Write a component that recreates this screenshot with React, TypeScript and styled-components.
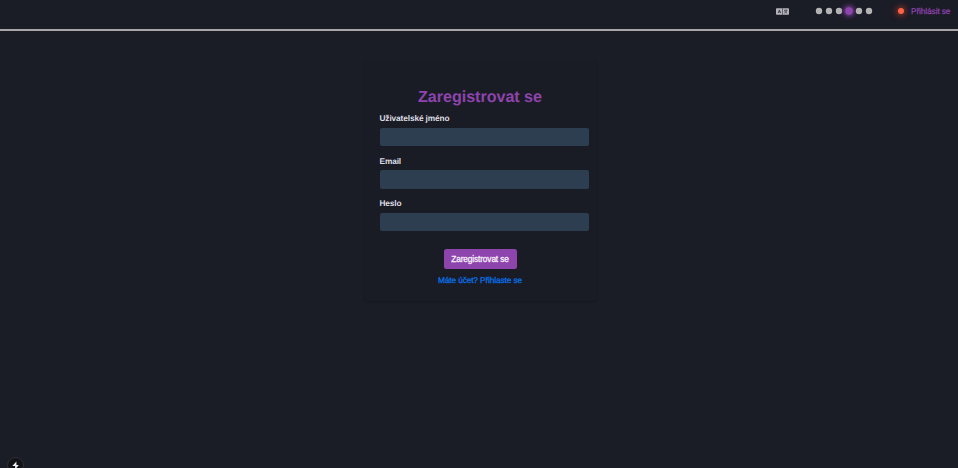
import React from "react";
import styled, { createGlobalStyle } from "styled-components";

const GlobalStyle = createGlobalStyle`
  * { box-sizing: border-box; }
  body {
    margin: 0;
    background: #1a1c26;
    font-family: "Liberation Sans", Arial, Helvetica, sans-serif;
    text-rendering: geometricPrecision;
    overflow: hidden;
  }
`;

const Page = styled.div`
  height: 468px;
  display: flex;
  flex-direction: column;
  align-items: center;
`;

const Header = styled.header`
  width: 100%;
  height: 31px;
  flex: none;
  display: flex;
  justify-content: flex-end;
  align-items: flex-start;
  padding-right: 7.5px;
  border-bottom: 2px solid #aaa5a8;
`;

const HeaderGroup = styled.div<{ $gap: number; $after: number }>`
  height: 22px;
  display: flex;
  align-items: center;
  gap: ${(p) => p.$gap}px;
  margin-right: ${(p) => p.$after}px;
`;

const Dot = styled.button<{ $active?: boolean }>`
  width: 6px;
  height: 6px;
  padding: 0;
  border: 0;
  border-radius: 50%;
  background: ${(p) => (p.$active ? "#8e44ad" : "#b3b3b3")};
  transform: ${(p) => (p.$active ? "scale(1.25)" : "scale(1.07)")};
  box-shadow: ${(p) => (p.$active ? "0 0 4px 1px #8e44ad" : "none")};
`;

const StatusDot = styled.span`
  width: 6px;
  height: 6px;
  border-radius: 50%;
  background: #ff6347;
  box-shadow: 0 0 6px 1px rgba(255, 75, 40, 0.65);
`;

const LoginLink = styled.a`
  width: 39.5px;
  color: #8e44ad;
  font-size: 8.3px;
  letter-spacing: -0.1px;
  line-height: 22px;
  white-space: nowrap;
  -webkit-text-stroke: 0.25px currentColor;
`;

const Card = styled.form`
  width: 233px;
  height: 241px;
  margin: 29px 0 0 2px;
  padding: 26px 16px 0;
  display: flex;
  flex-direction: column;
  align-items: center;
  border-radius: 4px;
  background: #1a1c25;
  box-shadow: 0 1px 2px rgba(0, 0, 0, 0.17);
`;

const Title = styled.h1`
  margin: 0;
  padding-top: 1px;
  color: #8e44ad;
  font-size: 16.1px;
  line-height: 20px;
  letter-spacing: -0.03px;
  white-space: nowrap;
`;

const Field = styled.label`
  align-self: flex-start;
  width: 209.5px;
  height: 42.5px;
  flex: none;
  padding-top: 6px;
  color: #dedce2;
  font-size: 8.3px;
  font-weight: 700;
  letter-spacing: -0.12px;
  line-height: 11px;
`;

const Input = styled.input`
  display: block;
  width: 100%;
  height: 18.5px;
  margin-top: 3.5px;
  border: 0;
  border-radius: 2px;
  background: #2c3e50;
  color: #dedce2;
  outline: none;
`;

const SubmitButton = styled.button`
  width: 73px;
  height: 20px;
  flex: none;
  margin-top: 14px;
  padding: 0;
  border: 0;
  border-radius: 2.5px;
  background: #8e44ad;
  color: #f5eff8;
  font: 8.3px/20px "Liberation Sans", Arial, sans-serif;
  letter-spacing: -0.12px;
  -webkit-text-stroke: 0.3px currentColor;
`;

const AccountLink = styled.a`
  margin-top: 6px;
  color: #0870e6;
  font-size: 8.3px;
  letter-spacing: -0.12px;
  line-height: 11px;
  white-space: nowrap;
  -webkit-text-stroke: 0.3px currentColor;
`;

const DevBadge = styled.div`
  position: fixed;
  left: 7px;
  top: 457px;
  width: 17px;
  height: 17px;
  display: flex;
  align-items: center;
  justify-content: center;
  border: 1px solid #303137;
  border-radius: 50%;
  background: #121317;
`;

const fields = [
  { label: "Uživatelské jméno", type: "text" },
  { label: "Email", type: "email" },
  { label: "Heslo", type: "password" },
];

const themes = [0, 1, 2, 3, 4, 5];

const LanguageIcon = () => (
  <svg width="13" height="7" viewBox="0 0 13 7">
    <rect width="13" height="6.6" y="0.2" rx="0.8" fill="#b5b4ba" />
    <path d="M6.5 0.2v6.6" stroke="#45454f" strokeWidth="0.7" />
    <path d="M2.2 5 3.4 1.9 4.6 5M2.6 4h1.6" fill="none" stroke="#30313b" strokeWidth="0.8" />
    <path d="M8 2.3h3.4M9.7 1.6v.7M8.4 5.1C10 4.3 10.7 3.4 10.8 2.3M8.6 3c.5 1.1 1.3 1.7 2.4 2.1" fill="none" stroke="#30313b" strokeWidth="0.7" />
  </svg>
);

const BoltIcon = () => (
  <svg width="9" height="9" viewBox="0 0 9 9">
    <path d="M5.4 0.5 1.3 5h2.8v3.5L7.8 4H5.4z" fill="#f0f0f2" />
  </svg>
);

export default function App() {
  return (
    <Page>
      <GlobalStyle />
      <Header>
        <HeaderGroup $gap={0} $after={27}>
          <LanguageIcon />
        </HeaderGroup>
        <HeaderGroup $gap={4} $after={26}>
          {themes.map((id) => (
            <Dot key={id} $active={id === 3} aria-label={`Motiv ${id + 1}`} />
          ))}
        </HeaderGroup>
        <HeaderGroup $gap={7} $after={0}>
          <StatusDot />
          <LoginLink>Přihlásit se</LoginLink>
        </HeaderGroup>
      </Header>
      <Card>
        <Title>Zaregistrovat se</Title>
        {fields.map((field) => (
          <Field key={field.label}>
            {field.label}
            <Input type={field.type} />
          </Field>
        ))}
        <SubmitButton type="button">Zaregistrovat se</SubmitButton>
        <AccountLink>Máte účet? Přihlaste se</AccountLink>
      </Card>
      <DevBadge>
        <BoltIcon />
      </DevBadge>
    </Page>
  );
}
